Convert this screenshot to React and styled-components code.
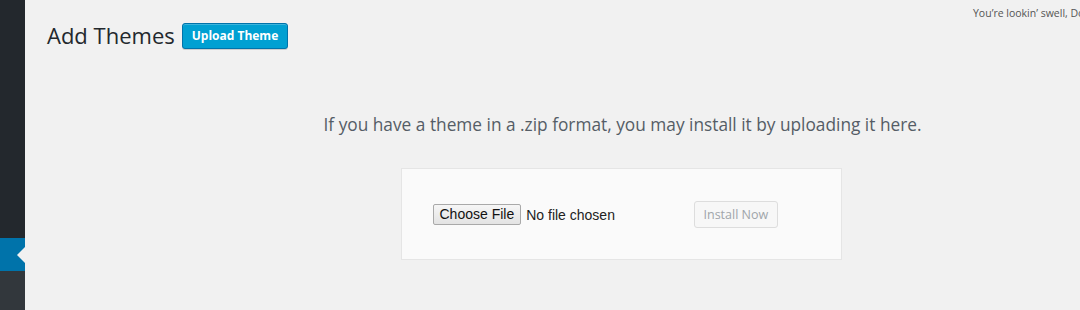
import React from 'react';
import styled, { createGlobalStyle } from 'styled-components';

const GlobalStyle = createGlobalStyle`
  html, body {
    margin: 0;
    padding: 0;
    background: #f1f1f1;
    overflow: hidden;
  }
  body {
    font-family: "Open Sans", "Noto Sans", sans-serif;
    color: #23282d;
  }
`;

const Layout = styled.div`
  display: flex;
  height: 310px;
  width: 100%;
`;

const Sidebar = styled.nav`
  width: 25px;
  flex: none;
  display: flex;
  flex-direction: column;
  background: #23282d;
`;

const MenuTop = styled.div`
  height: 238px;
  flex: none;
`;

const CurrentItem = styled.div`
  position: relative;
  height: 33px;
  flex: none;
  background: #0073aa;

  &::after {
    content: '';
    position: absolute;
    right: 0;
    top: 50%;
    margin-top: -8px;
    border: 8px solid transparent;
    border-right-color: #f1f1f1;
  }
`;

const Submenu = styled.div`
  flex: 1;
  background: #32373c;
`;

const Main = styled.main`
  flex: 1;
  min-width: 0;
  display: flex;
  flex-direction: column;
  overflow: hidden;
`;

const TopBar = styled.div`
  display: flex;
  padding: 6px 0 0 948px;
  height: 14px;
`;

const Dolly = styled.p`
  margin: 0;
  font-size: 10.5px;
  line-height: 14px;
  color: #555;
  white-space: nowrap;
`;

const Header = styled.div`
  display: flex;
  align-items: center;
  gap: 7px;
  padding: 1px 0 0 22px;
`;

const Title = styled.h1`
  margin: 0;
  font-size: 22px;
  font-weight: 400;
  line-height: 29px;
  color: #23282d;
`;

const PrimaryButton = styled.button`
  height: 26px;
  padding: 0 9px;
  border: 1px solid #0073aa;
  border-radius: 3px;
  background: #00a0d2;
  box-shadow: inset 0 1px 0 rgba(120, 200, 230, 0.5), 0 1px 0 rgba(0, 0, 0, 0.15);
  color: #fff;
  font-family: "Open Sans", "Noto Sans", sans-serif;
  font-size: 12px;
  font-weight: 700;
  white-space: nowrap;
  cursor: pointer;
`;

const UploadSection = styled.section`
  display: flex;
  flex-direction: column;
  align-items: center;
  padding-left: 285px;
  margin-top: 63px;
  width: 622px;
`;

const Help = styled.p`
  margin: 0 0 0 3px;
  font-size: 17.3px;
  line-height: 24px;
  color: #555d66;
  white-space: nowrap;
`;

const UploadForm = styled.form`
  display: flex;
  align-items: center;
  box-sizing: border-box;
  width: 441px;
  height: 92px;
  margin-top: 31px;
  padding: 0 31px;
  background: #fafafa;
  border: 1px solid #e5e5e5;
`;

const FileInput = styled.input`
  flex: none;
  width: 261px;
  font-family: "Liberation Sans", Arial, sans-serif;
  font-size: 14px;
  color: #222;

  &::file-selector-button {
    font-family: "Liberation Sans", Arial, sans-serif;
    font-size: 14px;
    color: #111;
    height: 21px;
    padding: 0 6px;
    margin-right: 5px;
    border: 1px solid #a9a9a9;
    border-radius: 2px;
    background: linear-gradient(#f6f6f6, #e3e3e3);
  }
`;

const SecondaryButton = styled.button`
  height: 27px;
  padding: 0 9px;
  border: 1px solid #ddd;
  border-radius: 3px;
  background: #f7f7f7;
  color: #a0a5aa;
  font-family: "Open Sans", "Noto Sans", sans-serif;
  font-size: 12.5px;
  white-space: nowrap;
`;

export default function App() {
  return (
    <>
      <GlobalStyle />
      <Layout>
        <Sidebar>
          <MenuTop />
          <CurrentItem />
          <Submenu />
        </Sidebar>
        <Main>
          <TopBar>
            <Dolly>You’re lookin’ swell, Dolly</Dolly>
          </TopBar>
          <Header>
            <Title>Add Themes</Title>
            <PrimaryButton type="button">Upload Theme</PrimaryButton>
          </Header>
          <UploadSection>
            <Help>If you have a theme in a .zip format, you may install it by uploading it here.</Help>
            <UploadForm onSubmit={(e) => e.preventDefault()}>
              <FileInput type="file" name="themezip" />
              <SecondaryButton type="submit" disabled>Install Now</SecondaryButton>
            </UploadForm>
          </UploadSection>
        </Main>
      </Layout>
    </>
  );
}
